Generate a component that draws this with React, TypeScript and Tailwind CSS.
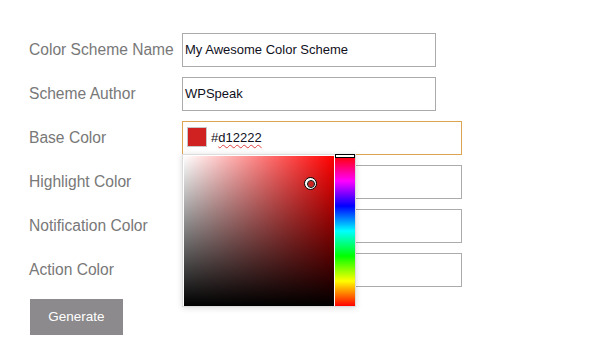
import React from 'react';

const fields = [
  { label: 'Color Scheme Name', value: 'My Awesome Color Scheme' },
  { label: 'Scheme Author', value: 'WPSpeak' },
];

const colorFields = ['Highlight Color', 'Notification Color', 'Action Color'];

const ColorPicker: React.FC = () => (
  <div className="absolute left-0 top-[33px] z-10 w-[174px] h-[153px] bg-white border border-[#dcdcdc] shadow-[0_1px_6px_rgba(0,0,0,0.15)] pl-[1px] pt-[1px] flex gap-[1px]">
    <div className="relative w-[150px] h-[150px] bg-[linear-gradient(to_bottom,transparent,#000),linear-gradient(to_right,#fff,#f00)]">
      <div className="absolute left-[120px] top-[21px] w-[13px] h-[13px] rounded-full border border-black bg-white flex items-center justify-center">
        <div className="w-[6px] h-[6px] rounded-full outline outline-1 outline-black bg-[#d12222]" />
      </div>
    </div>
    <div className="relative w-[20px] h-[150px] bg-[linear-gradient(to_bottom,#f00,#f0f,#00f,#0ff,#0f0,#ff0,#f00)]">
      <div className="absolute left-0 -top-[2px] w-[20px] h-[4px] bg-white border border-black" />
    </div>
  </div>
);

export default function App() {
  return (
    <div className="w-[600px] h-[362px] bg-white pl-[29px] pt-[33px] font-['Liberation_Sans',Arial,sans-serif]">
      <div className="flex flex-col gap-[10px]">
        {fields.map(f => (
          <div key={f.label} className="flex items-center h-[34px]">
            <div className="w-[153px] text-[15.6px] text-[#787878]">{f.label}</div>
            <div className="w-[254px] h-[34px] border border-[#ababab] px-[2px] flex items-center text-[13px] text-[#10101c]">
              {f.value}
            </div>
          </div>
        ))}
        <div className="flex items-center h-[34px]">
          <div className="w-[153px] text-[15.6px] text-[#787878]">Base Color</div>
          <div className="relative">
            <div className="w-[280px] h-[34px] border border-[#dba552] pl-[4px] flex items-center gap-[4px] text-[13px] text-[#10101c]">
              <div className="w-[20px] h-[20px] bg-[#d12222] border border-[#c8c8c8] -mt-[3px]" />
              <span>
                #<span className="underline decoration-wavy decoration-[#e04040] decoration-1 underline-offset-2">d12222</span>
              </span>
            </div>
            <ColorPicker />
          </div>
        </div>
        {colorFields.map(label => (
          <div key={label} className="flex items-center h-[34px]">
            <div className="w-[153px] text-[15.6px] text-[#787878]">{label}</div>
            <div className="w-[280px] h-[34px] border border-[#ababab]" />
          </div>
        ))}
      </div>
      <button className="mt-[12px] ml-[1px] w-[93px] h-[36px] bg-[#8c8a8c] text-white text-[13.5px]">
        Generate
      </button>
    </div>
  );
}
